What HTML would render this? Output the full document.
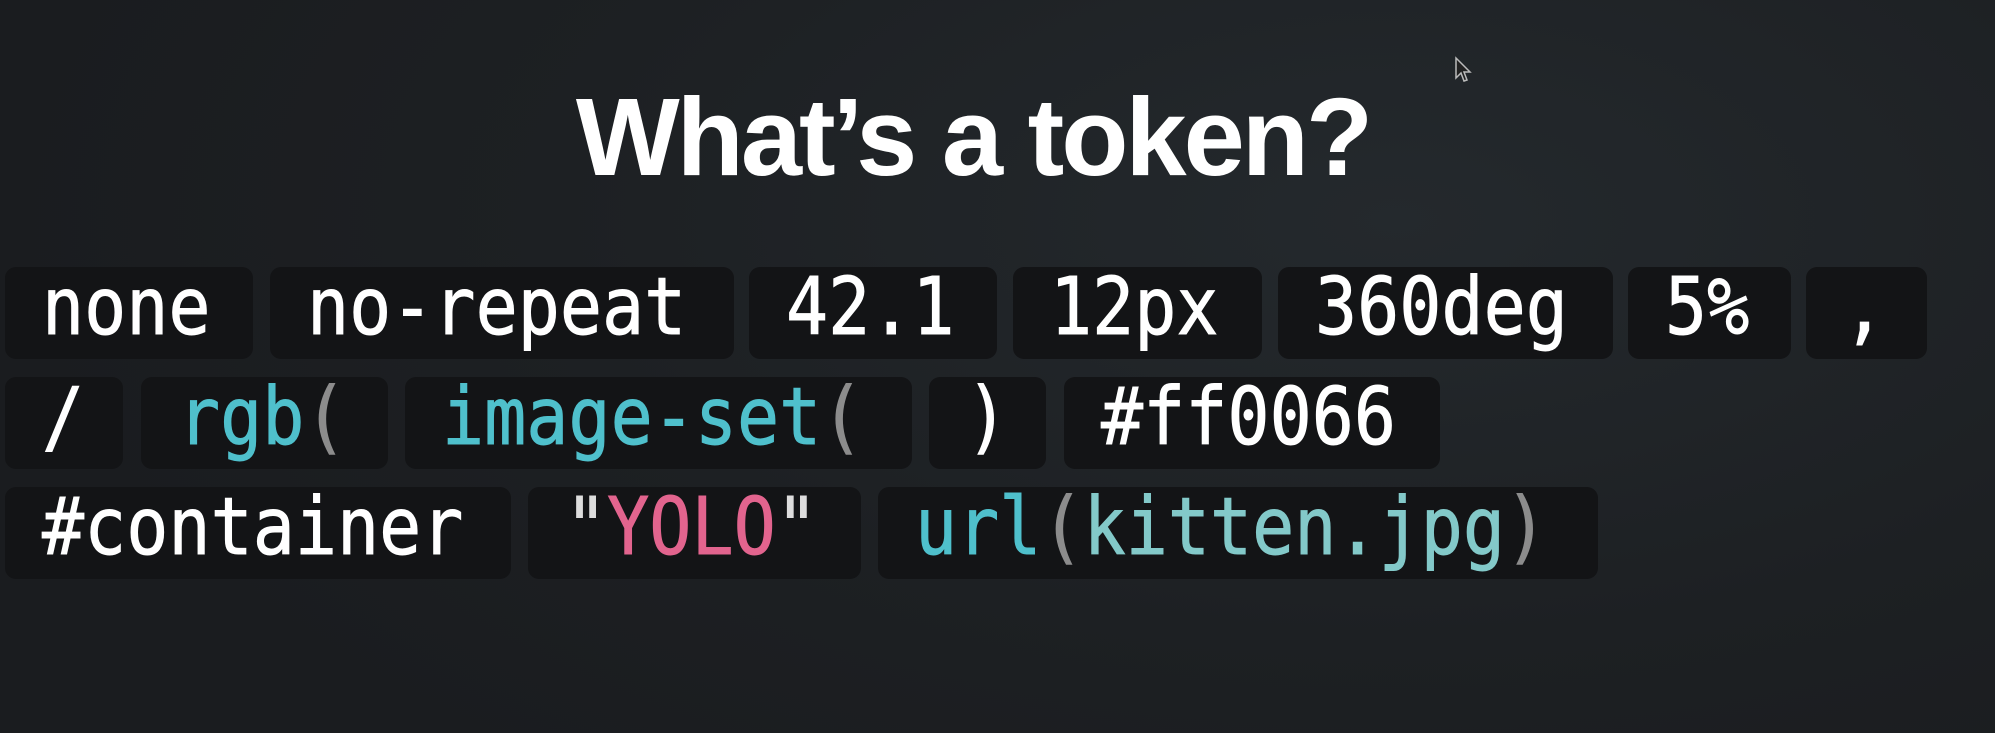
<!DOCTYPE html>
<html><head><meta charset="utf-8"><style>
html,body{margin:0;padding:0}
body{width:1995px;height:733px;overflow:hidden;position:relative;
background:radial-gradient(ellipse 1400px 700px at 70% 30%,#24292d 0%,#1d2023 60%,#1a1c1f 100%);}
h1{position:absolute;left:0;width:1946px;top:73px;margin:0;text-align:center;
font-family:"Liberation Sans",sans-serif;font-weight:bold;font-size:110px;letter-spacing:-3px;color:#fff;line-height:130px}
.b{position:absolute;height:92px;background:#131416;border-radius:11px;box-sizing:border-box;}
.b span{position:absolute;left:37px;top:1px;font-family:"DejaVu Sans Mono","Liberation Mono",monospace;font-size:70px;line-height:80px;color:#fff;white-space:pre;transform:scaleY(1.13);transform-origin:0 60%;-webkit-text-stroke:0.8px currentColor}
.b span b{font-weight:normal}
.c{color:#4fc0cc}.g{color:#8c8c8c}.p{color:#e2648e}.t{color:#83c9c9}
</style></head><body>
<h1>What’s a token?</h1>
<svg style="position:absolute;left:1454px;top:56px" width="18" height="28" viewBox="0 0 18 28"><path d="M2 2 L2 22 L7 17 L10 25 L13 24 L10 16 L16 16 Z" fill="#222" stroke="#bbb" stroke-width="1.5"/></svg>

<div class="b" style="left:5px;top:267px;width:248px"><span>none</span></div>
<div class="b" style="left:270px;top:267px;width:464px"><span>no-repeat</span></div>
<div class="b" style="left:749px;top:267px;width:248px"><span>42.1</span></div>
<div class="b" style="left:1013px;top:267px;width:249px"><span>12px</span></div>
<div class="b" style="left:1278px;top:267px;width:335px"><span>360deg</span></div>
<div class="b" style="left:1628px;top:267px;width:163px"><span>5%</span></div>
<div class="b" style="left:1806px;top:267px;width:121px;background:#131416"><span class="g">,</span></div>

<div class="b" style="left:5px;top:377px;width:118px"><span>/</span></div>
<div class="b" style="left:141px;top:377px;width:247px"><span><b class="c">rgb</b><b class="g">(</b></span></div>
<div class="b" style="left:405px;top:377px;width:507px"><span><b class="c">image-set</b><b class="g">(</b></span></div>
<div class="b" style="left:929px;top:377px;width:117px"><span class="g">)</span></div>
<div class="b" style="left:1064px;top:377px;width:376px"><span>#ff0066</span></div>

<div class="b" style="left:5px;top:487px;width:506px"><span>#container</span></div>
<div class="b" style="left:528px;top:487px;width:333px"><span><b style="color:#ddd">"</b><b class="p">YOLO</b><b style="color:#ddd">"</b></span></div>
<div class="b" style="left:878px;top:487px;width:720px"><span><b class="c">url</b><b class="g">(</b><b class="t">kitten.jpg</b><b class="g">)</b></span></div>
</body></html>
